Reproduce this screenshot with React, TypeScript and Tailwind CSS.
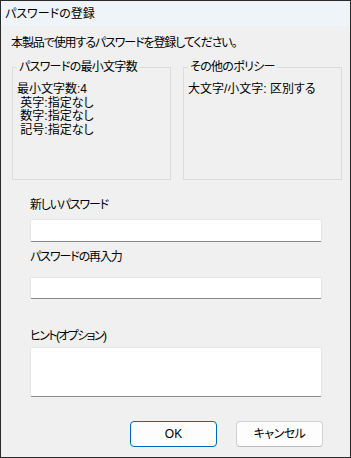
import React from "react";

const font = "font-['Liberation_Sans','Noto_Sans_CJK_JP',sans-serif] [font-feature-settings:'palt'] text-[12px] text-black";

function Field({ label, h, labelGap, mt, track }: { label: string; h: string; labelGap: string; mt: string; track: string }) {
  return (
    <div className={`flex flex-col ${mt}`}>
      <div className={`leading-[14px] ${track}`}>{label}</div>
      <div className={`${labelGap} ${h} w-[292px] bg-white border border-[#e6e6e6] border-b-[#8a8a8a] rounded-[2px]`} />
    </div>
  );
}

export default function App() {
  return (
    <div className={`${font} w-[351px] h-[458px] border border-[#2a2a2a] bg-[#f0f0f0] flex flex-col overflow-hidden`}>
      <div className="h-[25px] bg-[#eff4f9] flex items-center pl-[4px] leading-[14px]">パスワードの登録</div>
      <div className="flex flex-col pl-[10px] pt-[10px]">
        <div className="leading-[14px] tracking-[-1.1px]">本製品で使用するパスワードを登録してください。</div>
        <div className="flex gap-[12px] mt-[10px] pl-[1px]">
          <fieldset className="w-[159px] h-[120px] border border-[#dcdcdc] pl-[4px] pt-[9px]">
            <legend className="px-[2px] leading-[14px] tracking-[-0.7px]">パスワードの最小文字数</legend>
            <div className="leading-[13.5px] whitespace-pre">
              <div>最小文字数:4</div>
              <div> 英字:指定なし</div>
              <div> 数字:指定なし</div>
              <div> 記号:指定なし</div>
            </div>
          </fieldset>
          <fieldset className="w-[159px] h-[120px] border border-[#dcdcdc] pl-[4px] pt-[9px]">
            <legend className="px-[2px] leading-[14px] tracking-[-0.7px]">その他のポリシー</legend>
            <div className="leading-[13.5px] whitespace-pre">大文字/小文字: 区別する</div>
          </fieldset>
        </div>
      </div>
      <div className="flex flex-col pl-[29px]">
        <Field label="新しいパスワード" h="h-[23px]" labelGap="mt-[7px]" mt="mt-[18px]" track="tracking-[-1.2px]" />
        <Field label="パスワードの再入力" h="h-[22px]" labelGap="mt-[13px]" mt="mt-[8px]" track="tracking-[-1.1px]" />
        <Field label="ヒント(オプション)" h="h-[50px]" labelGap="mt-[4px]" mt="mt-[30px]" track="tracking-[-1.6px]" />
        <div className="flex gap-[19px] mt-[24px] pl-[100px]">
          <button className="w-[87px] h-[26px] rounded-[4px] bg-[#fdfdfd] border border-[#0067c0] flex items-center justify-center">OK</button>
          <button className="w-[87px] h-[26px] rounded-[4px] bg-[#fdfdfd] border border-[#d0d0d0] border-b-[#bcbcbc] flex items-center justify-center tracking-[-0.5px]">キャンセル</button>
        </div>
      </div>
    </div>
  );
}
